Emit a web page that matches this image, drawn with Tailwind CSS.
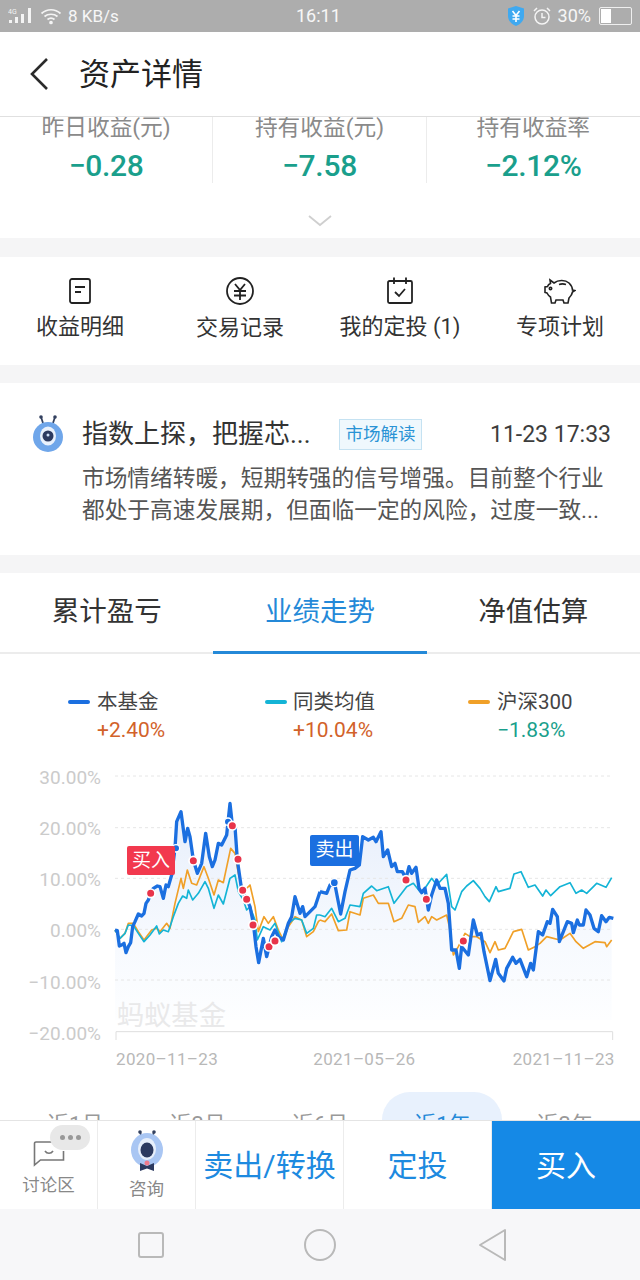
<!DOCTYPE html>
<html lang="zh-CN">
<head>
    <meta charset="UTF-8">
    <meta name="viewport" content="width=device-width, initial-scale=1.0">
    <title>资产详情</title>
    <script src="https://cdn.jsdelivr.net/npm/@tailwindcss/browser@4"></script>
</head>
<body class="bg-white font-['Roboto','Noto_Sans_CJK_SC',sans-serif]">
<div class="w-[640px] h-[1280px] flex flex-col overflow-hidden">

    <!-- status bar -->
    <div class="h-8 shrink-0 bg-[#adadad] flex items-center justify-between pl-2 pr-2 text-white/90 relative">
        <div class="flex items-center gap-1.5">
            <svg width="26" height="18" viewBox="0 0 26 18" fill="#f4f4f4"><text x="0" y="7" font-size="7" fill="#f4f4f4">4G</text><rect x="1" y="13" width="3" height="3"/><rect x="7" y="10" width="3" height="6"/><rect x="13" y="7" width="3" height="9"/><rect x="20" y="1" width="3" height="15"/></svg>
            <svg width="22" height="18" viewBox="0 0 22 18" fill="none" stroke="#f4f4f4" stroke-width="1.7"><path d="M1.500 6.500C7 1.500 15 1.500 20.500 6.500"/><path d="M4.500 9.500C8 6.500 14 6.500 17.500 9.500"/><path d="M7.500 12.500C9.500 11 12.500 11 14.500 12.500"/><circle cx="11" cy="15.500" r="1" fill="#f4f4f4"/></svg>
            <span class="text-[17px] leading-none">8 KB/s</span>
        </div>
        <span class="absolute left-[296px] text-[18px] leading-none">16:11</span>
        <div class="flex items-center gap-1.5">
            <svg width="20" height="22" viewBox="0 0 20 22"><path d="M10 1L18 3.500V11C18 16 14 19.500 10 21C6 19.500 2 16 2 11V3.500Z" fill="#3fa9f0"/><path d="M6.500 6L10 10.500L13.500 6M6.500 11H13.500M6.500 14H13.500M10 10.500V17" fill="none" stroke="#fff" stroke-width="1.600"/></svg>
            <svg width="20" height="20" viewBox="0 0 20 20" fill="none" stroke="#f4f4f4" stroke-width="1.500"><circle cx="10" cy="11" r="7"/><path d="M10 7V11.500H13.500M2 5L5 2M18 5L15 2"/></svg>
            <span class="text-[18px] leading-none">30%</span>
            <div class="w-[33px] h-[18px] border border-white/80 rounded-[2px] flex p-px ml-0.5">
                <div class="w-[10px] bg-white"></div>
            </div>
        </div>
    </div>

    <!-- header -->
    <div class="h-[85px] shrink-0 bg-white border-b border-[#e0e0e0] flex items-center relative z-10">
        <svg class="ml-[28px]" width="22" height="34" viewBox="0 0 22 34" fill="none" stroke="#2b2b2b" stroke-width="2.600"><path d="M19 2L4 17L19 32"/></svg>
        <h1 class="ml-[29px] text-[31px] text-[#222] leading-none">资产详情</h1>
    </div>

    <!-- scrolling content -->
    <div class="flex-1 overflow-hidden bg-[#f5f5f6]">

        <!-- summary -->
        <div class="h-[121px] bg-white relative">
            <div class="grid grid-cols-3 h-[62px]">
                <div class="text-center border-r border-[#ececec]">
                    <p class="text-[22.700px] leading-[22px] text-[#8a8a8a]">昨日收益(元)</p>
                    <p class="mt-[10px] text-[30px] leading-[34px] font-medium tracking-[-0.3px] text-[#1a9f8c]">−0.28</p>
                </div>
                <div class="text-center border-r border-[#ececec]">
                    <p class="text-[22.700px] leading-[22px] text-[#8a8a8a]">持有收益(元)</p>
                    <p class="mt-[10px] text-[30px] leading-[34px] font-medium tracking-[-0.3px] text-[#1a9f8c]">−7.58</p>
                </div>
                <div class="text-center">
                    <p class="text-[22.700px] leading-[22px] text-[#8a8a8a]">持有收益率</p>
                    <p class="mt-[10px] text-[30px] leading-[34px] font-medium tracking-[-0.3px] text-[#1a9f8c]">−2.12%</p>
                </div>
            </div>
            <svg class="mx-auto mt-[36px]" width="26" height="12" viewBox="0 0 26 12" fill="none" stroke="#cfcfcf" stroke-width="1.800"><path d="M2 1L13 10L24 1"/></svg>
        </div>

        <!-- shortcuts -->
        <div class="mt-[19px] h-[108px] bg-white grid grid-cols-4 text-center text-[22px] text-[#333]">
            <div class="flex flex-col items-center pt-[20px]">
                <svg width="24" height="28" viewBox="0 0 24 28" fill="none" stroke="#222" stroke-width="1.800"><rect x="2" y="2" width="20" height="24" rx="2"/><path d="M7 10H17M7 15H13"/></svg>
                <span class="mt-[7px] leading-[30px]">收益明细</span>
            </div>
            <div class="flex flex-col items-center pt-[20px]">
                <svg width="30" height="28" viewBox="0 0 30 28" fill="none" stroke="#222" stroke-width="1.800"><circle cx="15" cy="14" r="13"/><path d="M10 7L15 13L20 7M9 14H21M9 18.500H21M15 13V23"/></svg>
                <span class="mt-[8px] leading-[30px]">交易记录</span>
            </div>
            <div class="flex flex-col items-center pt-[20px]">
                <svg width="28" height="28" viewBox="0 0 28 28" fill="none" stroke="#222" stroke-width="1.800"><rect x="2" y="4" width="24" height="22" rx="1.500"/><path d="M8 0.500V7M20 0.500V7M9 15L13 19L19 12"/></svg>
                <span class="mt-[7px] leading-[30px]">我的定投 (1)</span>
            </div>
            <div class="flex flex-col items-center pt-[20px]">
                <svg width="32" height="28" viewBox="0 0 32 28" fill="none" stroke="#222" stroke-width="1.600"><path d="M6 3L10 6C14 3 21 2.500 25 6C28 9 28.500 11 28.500 13L31 13.500L28.500 15C28 18 26 20 25 21L24 26H20L19 23H12L11 26H7.500L6.500 20C4.500 19 3.500 17 3 16L1 15.500V10L3.500 9.500C4 8 5 7 6.500 6.500Z"/><path d="M15 7.500C17 6.800 20 6.800 22 7.500"/><circle cx="6.500" cy="11.500" r="1.200"/></svg>
                <span class="mt-[7px] leading-[30px]">专项计划</span>
            </div>
        </div>

        <!-- news -->
        <div class="mt-[18px] h-[172px] bg-white pl-[32px] pr-[29px] pt-[35px]">
            <div class="flex items-center h-[32px]">
                <svg class="shrink-0" width="32" height="38" viewBox="0 0 32 38"><path d="M11 8L9 2M21 8L23 2" stroke="#33415f" stroke-width="1.800"/><circle cx="9" cy="2" r="1.800" fill="#33415f"/><circle cx="23" cy="2" r="1.800" fill="#33415f"/><circle cx="16" cy="22" r="15" fill="#6fa6ea"/><ellipse cx="16" cy="21" rx="8" ry="9.500" fill="#e9f1fc"/><circle cx="16" cy="21" r="5.500" fill="#2c3a60"/><circle cx="16" cy="20" r="1.500" fill="#cfe0f8"/></svg>
                <span class="ml-[18px] w-[257px] text-[26px] leading-none text-[#333] whitespace-nowrap">指数上探&#xFF0C;把握芯...</span>
                <span class="h-[31px] w-[83px] flex items-center justify-center bg-[#eff8fd] border border-[#c5e2f2] text-[17.500px] text-[#2a93d5]">市场解读</span>
                <span class="ml-auto text-[23px] leading-none text-[#3d3d3d]">11-23 17:33</span>
            </div>
            <p class="mt-[13px] pl-[50px] text-[22.700px] leading-[32px] text-[#555] whitespace-nowrap">市场情绪转暖&#xFF0C;短期转强的信号增强。目前整个行业</p>
            <p class="pl-[50px] text-[22.700px] leading-[32px] text-[#555] whitespace-nowrap">都处于高速发展期&#xFF0C;但面临一定的风险&#xFF0C;过度一致...</p>
        </div>

        <!-- fund performance -->
        <div class="mt-[18px] h-[547px] bg-white relative">
            <div class="grid grid-cols-3 h-[81px] border-b-2 border-[#ececec] text-center text-[27.500px] text-[#333]">
                <div class="leading-[78px]">累计盈亏</div>
                <div class="leading-[78px] text-[#2489d8] border-b-[3px] border-[#2489d8] -mb-[2px]">业绩走势</div>
                <div class="leading-[78px]">净值估算</div>
            </div>

            <!-- legend -->
            <div class="flex h-[116px] pt-[35px]">
                <div class="w-[265px] pl-[68px]">
                    <div class="flex items-center gap-[7px] text-[20.500px] leading-[26px] text-[#444]"><i class="w-[22px] h-[4px] rounded-full bg-[#1b6fe0]"></i>本基金</div>
                    <p class="pl-[29px] mt-[2px] text-[21px] leading-[26px] text-[#d2622a]">+2.40%</p>
                </div>
                <div class="w-[203px]">
                    <div class="flex items-center gap-[6px] text-[20.500px] leading-[26px] text-[#444]"><i class="w-[22px] h-[4px] rounded-full bg-[#14b4d6]"></i>同类均值</div>
                    <p class="pl-[28px] mt-[2px] text-[21px] leading-[26px] text-[#d2622a]">+10.04%</p>
                </div>
                <div>
                    <div class="flex items-center gap-[7px] text-[20.500px] leading-[26px] text-[#444]"><i class="w-[22px] h-[4px] rounded-full bg-[#f0a028]"></i>沪深300</div>
                    <p class="pl-[29px] mt-[2px] text-[21px] leading-[26px] text-[#1a9f8c]">−1.83%</p>
                </div>
            </div>

            <!-- chart, coordinates are 3x px from the top of the plot -->
            <div class="absolute left-0 top-[187px] w-[640px] h-[310px]">
                <svg width="640" height="310" viewBox="0 0 1920 930">
                    <defs>
                        <linearGradient id="area" gradientUnits="userSpaceOnUse" x1="0" y1="130" x2="0" y2="780">
                            <stop offset="0" stop-color="#e6eefb"/>
                            <stop offset="0.6" stop-color="#f6f9fe"/>
                            <stop offset="1" stop-color="#fdfeff"/>
                        </linearGradient>
                    </defs>
                    <g font-size="57" fill="#cbcbcb" text-anchor="end">
                        <text x="303" y="72">30.00%</text>
                        <text x="303" y="226">20.00%</text>
                        <text x="303" y="379">10.00%</text>
                        <text x="303" y="532">0.00%</text>
                        <text x="303" y="686">−10.00%</text>
                        <text x="303" y="840">−20.00%</text>
                    </g>

                    <!-- area under fund line -->
                    <polygon fill="url(#area)" points="345,510 352,512 358,558 365,555 372,550 378,578 385,560 392,548 398,500 405,485 415,462 425,468 432,460 438,430 445,420 452,400 460,385 472,378 480,380 490,415 498,375 505,380 515,345 525,265 530,185 543,155 555,245 563,205 570,230 580,300 592,340 605,310 617,220 628,290 637,320 645,300 655,250 665,255 680,225 690,130 697,195 705,200 712,300 725,390 740,418 750,440 760,490 768,560 776,608 790,535 800,590 815,530 825,510 835,530 850,540 865,490 875,470 885,410 900,460 908,440 915,470 930,455 945,440 960,395 961,780 345,780"/>
                    <g transform="translate(960 0)">
                        <polygon fill="url(#area)" points="0,380 20,400 30,375 45,375 62,462 75,395 90,330 105,325 118,315 128,230 145,240 160,232 168,245 183,215 190,290 203,270 215,320 225,310 232,335 247,335 258,355 267,320 275,340 288,322 297,385 305,398 315,385 325,450 335,405 350,360 360,385 375,385 385,430 395,570 408,570 418,625 425,560 445,585 460,480 472,525 483,520 492,575 510,662 527,598 535,640 552,663 560,625 578,592 588,610 600,598 620,650 632,610 640,630 655,515 668,525 682,485 690,490 698,448 712,470 718,545 742,485 755,490 760,518 772,480 778,495 790,495 798,450 810,465 822,505 835,515 845,467 858,485 868,472 875,475 875,780 0,780"/>
                    </g>

                    <g stroke="#e6e6e6" stroke-width="3" stroke-dasharray="9 9">
                        <path d="M345 48H1835M345 203H1835M345 355H1835M345 508H1835M345 660H1835"/>
                    </g>
                    <text x="350" y="796" font-size="82" fill="#e9e9ea">蚂蚁基金</text>
                    <path d="M348 840V815H1838V840" fill="none" stroke="#dedede" stroke-width="3"/>
                    <g font-size="51" fill="#b8b8b8" letter-spacing="1">
                        <text x="348" y="916">2020–11–23</text>
                        <text x="940" y="916">2021–05–26</text>
                        <text x="1538" y="916">2021–11–23</text>
                    </g>

                    <!-- left half -->
                    <g fill="none" stroke-linejoin="round">
                        <polyline stroke="#f0a028" stroke-width="5" points="345,510 360,535 375,520 385,490 400,490 415,515 432,540 455,510 470,505 480,515 500,490 510,505 525,430 543,355 550,385 562,330 575,370 590,375 612,320 625,355 642,405 655,360 670,368 692,265 705,280 715,340 730,395 750,375 765,440 775,515 792,470 805,490 820,470 835,510 850,540 865,500 885,470 905,480 920,530 940,515 955,485 960,480"/>
                        <polyline stroke="#14b4d6" stroke-width="5" points="345,510 360,535 375,520 385,495 400,497 415,520 432,545 450,525 470,498 478,522 490,510 505,515 520,470 535,430 548,408 560,415 565,390 578,420 595,400 615,365 625,385 642,445 655,405 670,432 690,355 705,345 715,395 730,420 740,450 750,440 765,480 772,540 790,500 810,510 825,490 845,545 865,490 885,475 905,480 920,520 940,505 950,465 960,465"/>
                        <polyline stroke="#1b6fe0" stroke-width="10" points="345,510 352,512 358,558 365,555 372,550 378,578 385,560 392,548 398,500 405,485 415,462 425,468 432,460 438,430 445,420 452,400 460,385 472,378 480,380 490,415 498,375 505,380 515,345 525,265 530,185 543,155 555,245 563,205 570,230 580,300 592,340 605,310 617,220 628,290 637,320 645,300 655,250 665,255 680,225 690,130 697,195 705,200 712,300 725,390 740,418 750,440 760,490 768,560 776,608 790,535 800,590 815,530 825,510 835,530 850,540 865,490 875,470 885,410 900,460 908,440 915,470 930,455 945,440 960,395"/>
                    </g>
                    <!-- right half -->
                    <g transform="translate(960 0)" fill="none" stroke-linejoin="round">
                        <polyline stroke="#f0a028" stroke-width="5" points="0,480 15,485 35,462 55,512 80,510 90,455 120,465 130,415 160,405 175,430 205,430 222,485 245,475 265,435 285,440 295,487 315,470 325,490 335,470 350,480 380,465 388,500 400,585 415,560 435,520 450,530 470,530 495,545 510,578 525,545 535,570 555,565 580,515 605,508 625,570 645,560 660,550 680,530 720,540 750,520 768,545 790,565 825,545 855,548 860,560 875,540"/>
                        <polyline stroke="#14b4d6" stroke-width="5" points="0,465 15,470 35,445 55,485 75,475 90,435 120,440 130,400 155,378 170,392 205,380 222,430 260,380 280,370 300,395 315,385 335,355 350,375 380,343 395,440 405,450 425,395 440,378 460,362 480,385 495,410 508,425 528,380 535,395 570,385 582,342 603,335 625,382 645,375 668,408 678,390 692,407 720,380 750,368 768,400 785,390 800,400 830,370 858,382 875,353"/>
                        <polyline stroke="#1b6fe0" stroke-width="10" points="0,395 20,400 30,375 45,375 62,462 75,395 90,330 105,325 118,315 128,230 145,240 160,232 168,245 183,215 190,290 203,270 215,320 225,310 232,335 247,335 258,355 267,320 275,340 288,322 297,385 305,398 315,385 325,450 335,405 350,360 360,385 375,385 385,430 395,570 408,570 418,625 425,560 445,585 460,480 472,525 483,520 492,575 510,662 527,598 535,640 552,663 560,625 578,592 588,610 600,598 620,650 632,610 640,630 655,515 668,525 682,485 690,490 698,448 712,470 718,545 742,485 755,490 760,518 772,480 778,495 790,495 798,450 810,465 822,505 835,515 845,467 858,485 868,472 880,475"/>
                    </g>

                    <!-- trade markers -->
                    <g fill="#1b6fe0" stroke="#fff" stroke-width="4">
                        <circle cx="528" cy="265" r="11"/>
                        <circle cx="684" cy="185" r="11"/>
                        <circle cx="1003" cy="368" r="12"/>
                    </g>
                    <g fill="#e8344a" stroke="#fff" stroke-width="5">
                        <circle cx="452" cy="400" r="13"/>
                        <circle cx="580" cy="302" r="13"/>
                        <circle cx="697" cy="197" r="13"/>
                        <circle cx="714" cy="298" r="13"/>
                        <circle cx="728" cy="391" r="13"/>
                        <circle cx="740" cy="418" r="13"/>
                        <circle cx="759" cy="495" r="13"/>
                        <circle cx="807" cy="560" r="13"/>
                        <circle cx="825" cy="543" r="13"/>
                        <circle cx="1218" cy="360" r="13"/>
                        <circle cx="1279" cy="418" r="13"/>
                        <circle cx="1390" cy="543" r="13"/>
                    </g>
                </svg>
                <span class="absolute left-[127px] top-[86px] w-[48px] h-[29px] rounded-[2px] bg-[#f2394e] text-white text-[19px] leading-[29px] text-center">买入</span>
                <span class="absolute left-[310px] top-[75px] w-[49px] h-[31px] rounded-[2px] bg-[#1b6fe0] text-white text-[19px] leading-[30px] text-center">卖出</span>
            </div>

            <!-- period pills, cut off by the action bar -->
            <div class="absolute left-0 top-[519px] w-[640px] h-[60px] text-[22px] text-[#999]">
                <div class="absolute left-[382px] w-[120px] h-[56px] rounded-full bg-[#e8f1fd]"></div>
                <div class="relative grid grid-cols-5 px-[14px] pt-[18px] leading-[30px] text-center">
                    <span>近1月</span>
                    <span>近3月</span>
                    <span>近6月</span>
                    <span class="text-[#2489d8]">近1年</span>
                    <span>近3年</span>
                </div>
            </div>
        </div>
    </div>

    <!-- action bar -->
    <div class="h-[89px] shrink-0 bg-white border-t border-[#e4e4e4] flex relative z-10">
        <div class="w-[98px] border-r border-[#ececec] relative flex flex-col items-center pt-[18px]">
            <svg width="32" height="28" viewBox="0 0 32 28" fill="none" stroke="#777" stroke-width="1.600"><path d="M25 3H3A1.500 1.500 0 0 0 1.500 4.500V26L7.500 21H30.500V12"/><path d="M12 12C14 15 18 15 20 12"/></svg>
            <span class="mt-[6px] text-[17.500px] leading-[24px] text-[#888]">讨论区</span>
            <div class="absolute left-[50px] top-[4px] w-[40px] h-[25px] rounded-full bg-[#e8e8e8] flex items-center justify-center gap-[3px]">
                <i class="w-[5px] h-[5px] rounded-full bg-[#999]"></i><i class="w-[5px] h-[5px] rounded-full bg-[#999]"></i><i class="w-[5px] h-[5px] rounded-full bg-[#999]"></i>
            </div>
        </div>
        <div class="w-[98px] border-r border-[#ececec] flex flex-col items-center pt-[9px]">
            <svg width="36" height="42" viewBox="0 0 36 42"><path d="M13 8L11 2M23 8L25 2" stroke="#33415f" stroke-width="1.800"/><circle cx="11" cy="2" r="1.800" fill="#33415f"/><circle cx="25" cy="2" r="1.800" fill="#33415f"/><ellipse cx="18" cy="20" rx="16" ry="17" fill="#a9c6f3"/><ellipse cx="18" cy="19" rx="9" ry="11" fill="#e7effb"/><ellipse cx="18" cy="20" rx="6.500" ry="7.500" fill="#2c3a60"/><path d="M11 33L18 36L25 33V41L18 38.500L11 41Z" fill="#2c3a60"/><circle cx="18" cy="33" r="2.500" fill="#ef7a8c"/></svg>
            <span class="mt-[5px] text-[17.500px] leading-[24px] text-[#888]">咨询</span>
        </div>
        <button class="w-[148px] border-r border-[#ececec] text-[30px] text-[#1d8ae0] whitespace-nowrap">卖出/转换</button>
        <button class="w-[148px] border-r border-[#ececec] text-[30px] text-[#1d8ae0]">定投</button>
        <button class="flex-1 bg-[#1589e6] text-[30px] text-white">买入</button>
    </div>

    <!-- android nav -->
    <div class="h-[71px] shrink-0 bg-[#f7f7f9] relative flex items-center justify-center">
        <div class="w-[640px] h-[71px] grid grid-cols-3 items-center">
            <svg class="ml-[137px]" width="28" height="28" viewBox="0 0 28 28" fill="none" stroke="#b9b9b9" stroke-width="2"><rect x="2" y="2" width="24" height="24" rx="2"/></svg>
            <svg class="ml-[90px]" width="34" height="34" viewBox="0 0 34 34" fill="none" stroke="#b9b9b9" stroke-width="2"><circle cx="17" cy="17" r="15"/></svg>
            <svg class="ml-[51px]" width="30" height="34" viewBox="0 0 30 34" fill="none" stroke="#b9b9b9" stroke-width="2" stroke-linejoin="round"><path d="M27 2V32L2 17Z"/></svg>
        </div>
    </div>
</div>
</body>
</html>
